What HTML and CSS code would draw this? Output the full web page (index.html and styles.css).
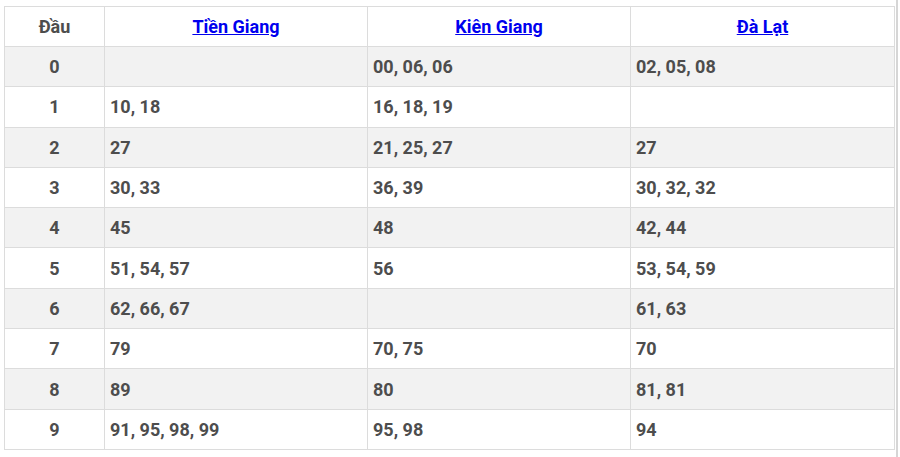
FILE: index.html
```html
<!DOCTYPE html>
<html lang="vi">
<head>
<meta charset="utf-8">
<link rel="stylesheet" href="styles.css">
</head>
<body>
<div class="wrap">
<table class="kq">
<thead>
<tr><th class="c-dau">Đầu</th><th><a href="#">Tiền Giang</a></th><th><a href="#">Kiên Giang</a></th><th><a href="#">Đà Lạt</a></th></tr>
</thead>
<tbody>
<tr><td class="c-dau">0</td><td></td><td>00, 06, 06</td><td>02, 05, 08</td></tr>
<tr><td class="c-dau">1</td><td>10, 18</td><td>16, 18, 19</td><td></td></tr>
<tr><td class="c-dau">2</td><td>27</td><td>21, 25, 27</td><td>27</td></tr>
<tr><td class="c-dau">3</td><td>30, 33</td><td>36, 39</td><td>30, 32, 32</td></tr>
<tr><td class="c-dau">4</td><td>45</td><td>48</td><td>42, 44</td></tr>
<tr><td class="c-dau">5</td><td>51, 54, 57</td><td>56</td><td>53, 54, 59</td></tr>
<tr><td class="c-dau">6</td><td>62, 66, 67</td><td></td><td>61, 63</td></tr>
<tr><td class="c-dau">7</td><td>79</td><td>70, 75</td><td>70</td></tr>
<tr><td class="c-dau">8</td><td>89</td><td>80</td><td>81, 81</td></tr>
<tr><td class="c-dau">9</td><td>91, 95, 98, 99</td><td>95, 98</td><td>94</td></tr>
</tbody>
</table>
</div>
</body>
</html>
```

FILE: styles.css
```css
html, body {
  margin: 0;
  padding: 0;
  background: #fff;
}
.wrap {
  width: 890px;
  padding: 6px 2px 0 4px;
  height: 451px;
  border-right: 2px solid #d6d6d6;
}
.kq {
  width: 891px;
  border-collapse: collapse;
  table-layout: fixed;
  font-family: Roboto, "Liberation Sans", Arial, sans-serif;
  font-size: 18px;
  font-weight: 700;
  color: #4d4d4d;
}
.kq th, .kq td {
  border: 1px solid #dcdcdc;
  height: 40.3px;
  padding: 0 5px;
  box-sizing: border-box;
}
.kq th {
  text-align: center;
  height: 40px;
}
.kq th:first-child, .kq td:first-child { width: 100px; }
.kq th:nth-child(2), .kq th:nth-child(3) { width: 263px; }
.kq td { text-align: left; }
.kq td.c-dau { text-align: center; }
.kq tbody tr:nth-child(odd) { background: #f2f2f2; }
.kq a {
  color: #0000ee;
  text-decoration: underline;
}
```
